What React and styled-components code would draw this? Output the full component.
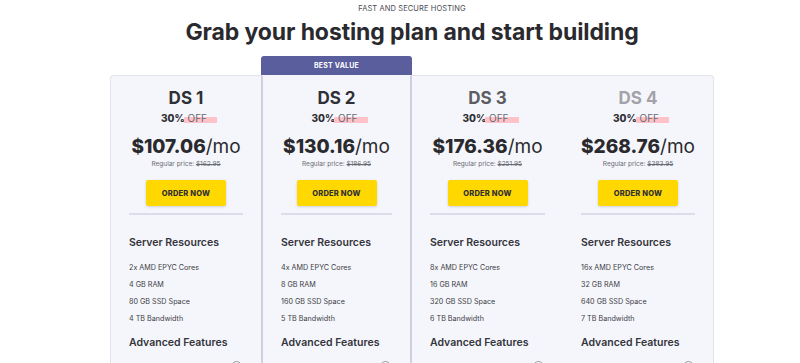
import styled, { createGlobalStyle } from 'styled-components';

const plans = [
    { name: 'DS 1', tone: '#2f2f36', price: '$107.06', regular: '$162.95', cores: 2, ram: 4, ssd: 80, bw: 4 },
    { name: 'DS 2', tone: '#2f2f36', price: '$130.16', regular: '$186.95', cores: 4, ram: 8, ssd: 160, bw: 5, best: true },
    { name: 'DS 3', tone: '#5c5c62', price: '$176.36', regular: '$251.95', cores: 8, ram: 16, ssd: 320, bw: 6 },
    { name: 'DS 4', tone: '#a2a2a8', price: '$268.76', regular: '$383.95', cores: 16, ram: 32, ssd: 640, bw: 7 },
];

const GlobalStyle = createGlobalStyle`
    body {
        margin: 0;
        background: #fff;
        font-family: 'Inter', 'Liberation Sans', sans-serif;
        overflow: hidden;
    }
`

export default function App(){
    return(
        <Page>
            <GlobalStyle />
            <Eyebrow>FAST AND SECURE HOSTING</Eyebrow>
            <Title>Grab your hosting plan and start building</Title>
            <Plans>
                {plans.map((p) => (
                    <Column key={p.name}>
                        {p.best ? <Badge>BEST VALUE</Badge> : <BadgeSpace />}
                        <Card $best={p.best}>
                            <Name $tone={p.tone}>{p.name}</Name>
                            <Discount><b>30%</b> <Off>OFF</Off></Discount>
                            <Price><b>{p.price}</b>/mo</Price>
                            <Regular>Regular price: <s>{p.regular}</s></Regular>
                            <Order>ORDER NOW</Order>
                            <Divider />
                            <Section $gap={21}>Server Resources</Section>
                            <List>
                                <li>{p.cores}x AMD EPYC Cores</li>
                                <li>{p.ram} GB RAM</li>
                                <li>{p.ssd} GB SSD Space</li>
                                <li>{p.bw} TB Bandwidth</li>
                            </List>
                            <Section $gap={9}>Advanced Features</Section>
                            <Feature>
                                <Info />
                            </Feature>
                        </Card>
                    </Column>
                ))}
            </Plans>
        </Page>
    )
}

const Page = styled.div`
    width: 800px;
    height: 363px;
    box-sizing: border-box;
    padding-left: 24px;
    display: flex;
    flex-direction: column;
    align-items: center;
    overflow: hidden;
`
const Eyebrow = styled.div`
    margin-top: 4px;
    font-size: 7.5px;
    line-height: 9px;
    color: #4a4a52;
    letter-spacing: 0.1px;
`
const Title = styled.h1`
    margin: 5px 0 0;
    font-size: 23px;
    line-height: 28px;
    font-weight: 700;
    color: #2a2a2e;
    letter-spacing: -0.1px;
`
const Plans = styled.div`
    margin-top: 10px;
    display: flex;
    width: 604px;
`
const Column = styled.div`
    flex: 1;
    display: flex;
    flex-direction: column;
`
const Badge = styled.div`
    height: 19px;
    background: #5b5e9d;
    border-radius: 3px 3px 0 0;
    color: #fff;
    font-size: 7px;
    font-weight: 700;
    display: flex;
    align-items: center;
    justify-content: center;
    letter-spacing: 0.2px;
`
const BadgeSpace = styled.div`
    height: 19px;
`
const Card = styled.div`
    background: #f5f6fb;
    border-top: 1px solid ${p => p.$best ? '#f5f6fb' : '#e3e3ec'};
    border-left: ${p => p.$best ? '2px solid #cfcfe3' : 'none'};
    border-right: ${p => p.$best ? '2px solid #cfcfe3' : 'none'};
    ${Column}:first-child & {
        border-left: 1px solid #e3e3ec;
        border-radius: 4px 0 0 0;
    }
    ${Column}:last-child & {
        border-right: 1px solid #e3e3ec;
        border-radius: 0 4px 0 0;
    }
    height: 320px;
    padding: 11px 18px 0;
    display: flex;
    flex-direction: column;
    align-items: center;
`
const Name = styled.div`
    font-size: 17px;
    line-height: 22px;
    font-weight: 700;
    color: ${p => p.$tone};
`
const Discount = styled.div`
    margin-top: 2px;
    margin-left: 6px;
    font-size: 10px;
    line-height: 14px;
    color: #2f2f36;
    b { font-weight: 800; }
`
const Off = styled.span`
    color: #6a6a72;
    padding-right: 10px;
    margin-left: -4px;
    padding-left: 4px;
    background: linear-gradient(transparent 45%, #ffc2c8 45%, #ffc2c8 90%, transparent 90%);
`
const Price = styled.div`
    margin-top: 10px;
    font-size: 19px;
    line-height: 24px;
    color: #2a2a2e;
    b { font-weight: 800; }
`
const Regular = styled.div`
    margin-top: 1px;
    font-size: 6.5px;
    line-height: 9px;
    color: #6a6a72;
`
const Order = styled.button`
    margin-top: 11px;
    width: 80px;
    height: 26px;
    border: none;
    border-radius: 2px;
    background: #ffd800;
    box-shadow: 0 1px 3px rgba(0,0,0,0.15);
    font-family: inherit;
    font-size: 7.5px;
    font-weight: 800;
    color: #2f2f36;
    letter-spacing: 0.2px;
    padding: 0;
`
const Divider = styled.div`
    margin-top: 7px;
    align-self: stretch;
    height: 2px;
    background: #dcdcea;
`
const Section = styled.div`
    align-self: stretch;
    margin-top: ${p => p.$gap}px;
    font-size: 10.5px;
    line-height: 14px;
    font-weight: 600;
    color: #34343c;
`
const List = styled.ul`
    align-self: stretch;
    list-style: none;
    margin: 9px 0 0;
    padding: 0;
    li {
        font-size: 7.2px;
        line-height: 17px;
        color: #3c3c44;
    }
`
const Feature = styled.div`
    align-self: stretch;
    margin-top: 11px;
    display: flex;
    justify-content: flex-end;
`
const Info = styled.span`
    width: 9px;
    height: 9px;
    border: 1px solid #9a9aa4;
    border-radius: 50%;
    margin-right: 1px;
`
